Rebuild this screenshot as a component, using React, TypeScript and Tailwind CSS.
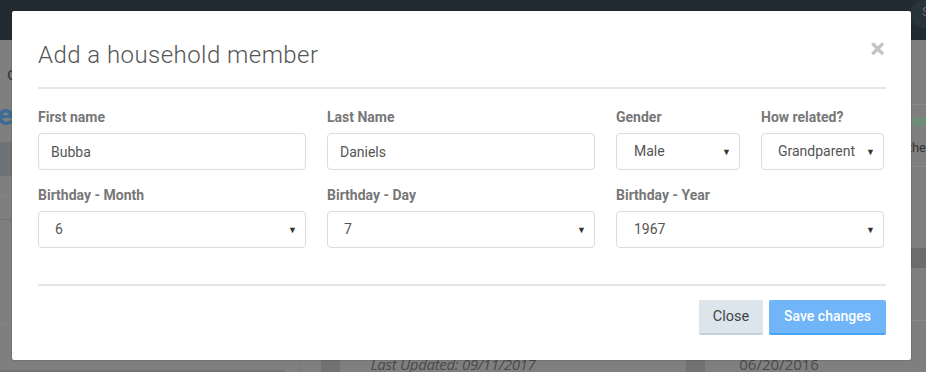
import { useState } from 'react';

const labelCls = 'block text-[14px] leading-5 font-bold text-[#777] mb-[6px]';
const boxCls =
  'relative w-full h-[37px] rounded-[4px] border border-[#dcdcdc] bg-white text-[14px] text-[#555] flex items-center';

function Select({ value, pad = 'pl-4' }: { value: string; pad?: string }) {
  return (
    <div className={boxCls}>
      <span className={pad + ' whitespace-nowrap'}>{value}</span>
      <span className="absolute right-[8px] top-[14px] text-[9px] leading-none text-[#333]">▼</span>
    </div>
  );
}

export default function App() {
  const [first, setFirst] = useState('Bubba');
  const [last, setLast] = useState('Daniels');

  return (
    <div className="relative w-[926px] h-[372px] overflow-hidden bg-[#7f7f7f] font-['Roboto',sans-serif]">
      {/* page behind the backdrop, drawn already dimmed */}
      <header className="h-10 bg-[#222b32] flex justify-end">
        <div className="w-[40px] h-[28px] -mr-[24px] rounded-bl-[14px] rounded-tl-[14px] bg-[#29333a] text-[#66707a] text-[13px] pl-[12px] pt-[2px]">
          S
        </div>
      </header>
      <div className="flex h-[332px]">
        <div className="w-[307px] flex flex-col border-r border-[#777]">
          <div className="h-[24px]" />
          <div className="pl-[7px] text-[18px] text-[#3a3a3a] leading-[20px]">c</div>
          <div className="h-[16px]" />
          <div className="-ml-[3px] text-[30px] font-bold leading-[30px] text-[#3c6c96] tracking-tight">er</div>
          <div className="h-[12px]" />
          <div className="h-[34px] bg-[#6d7377]" />
          <div className="h-[21px] border-b border-[#868686]" />
          <div className="h-[23px] border-b border-[#737373]" />
          <div className="h-[105px] border-b border-[#868686]" />
          <div className="flex-1" />
          <div className="h-[2px] w-[285px] bg-[#737373]" />
        </div>
        <div className="w-[21px]" />
        <div className="w-[20px] bg-[#727272]" />
        <div className="w-[353px] flex flex-col justify-end">
          <div className="pl-[30px] -mb-[3px] text-[15px] italic text-[#4a4a4a] font-['Open_Sans',sans-serif] tracking-[-0.3px] whitespace-nowrap">
            Last Updated: 09/11/2017
          </div>
        </div>
        <div className="w-[20px] bg-[#727272]" />
        <div className="flex-1 flex flex-col">
          <div className="h-[65px] border-b border-[#8a8a8a]" />
          <div className="h-[12px]" />
          <div className="h-[9px] bg-[#6f8c7b]" />
          <div className="h-[14px]" />
          <div className="pl-[192px] text-[13px] text-[#333] leading-[16px] whitespace-nowrap overflow-hidden">n the</div>
          <div className="h-[11px] border-b border-[#8a8a8a]" />
          <div className="h-[81px]" />
          <div className="h-[20px] bg-[#6c6c6c]" />
          <div className="h-[53px] border-b border-[#8a8a8a]" />
          <div className="flex-1 flex items-end">
            <div className="pl-[34px] -mb-[3px] text-[15px] text-[#4a4a4a] font-['Open_Sans',sans-serif]">06/20/2016</div>
          </div>
        </div>
      </div>

      {/* modal */}
      <div className="absolute left-[12px] top-[11px] w-[899px] h-[349px] bg-white rounded-[2px] shadow-[0_0_2px_rgba(0,0,0,0.35)] px-[26px]">
        <div className="flex items-start justify-between pt-[30px] pb-[18px] border-b-2 border-[#e6e6e6] w-[848px]">
          <h4 className="text-[24px] leading-7 font-light text-[#555] tracking-[0.45px]">Add a household member</h4>
          <button className="text-[28px] leading-none font-bold text-[#c3c3c3] mt-[-6px] mr-[1px]">×</button>
        </div>

        <div className="pt-[18px] pb-[36px] w-[848px]">
          <div className="grid grid-cols-[268px_268px_124px_123px] gap-x-[21px] gap-y-[15px] w-[846px]">
            <div>
              <label className={labelCls}>First name</label>
              <input
                value={first}
                onChange={(e) => setFirst(e.target.value)}
                className={boxCls + ' px-[12px] outline-none'}
              />
            </div>
            <div>
              <label className={labelCls}>Last Name</label>
              <input
                value={last}
                onChange={(e) => setLast(e.target.value)}
                className={boxCls + ' px-[12px] outline-none'}
              />
            </div>
            <div>
              <label className={labelCls}>Gender</label>
              <Select value="Male" pad="pl-[17px]" />
            </div>
            <div>
              <label className={labelCls}>How related?</label>
              <Select value="Grandparent" pad="pl-[16px]" />
            </div>
            <div>
              <label className={labelCls}>Birthday - Month</label>
              <Select value="6" />
            </div>
            <div>
              <label className={labelCls}>Birthday - Day</label>
              <Select value="7" />
            </div>
            <div className="col-span-2">
              <label className={labelCls}>Birthday - Year</label>
              <Select value="1967" pad="pl-[17px]" />
            </div>
          </div>
        </div>

        <div className="border-t-2 border-[#e6e6e6] w-[848px] pt-[14px] flex justify-end gap-[6px]">
          <button className="h-[35px] w-[64px] rounded-[2px] bg-[#dce5eb] border-b-2 border-[#c6d0d7] text-[14.5px] text-[#444]">
            Close
          </button>
          <button className="h-[35px] w-[117px] rounded-[2px] bg-[#6fb5f8] border-b-2 border-[#4aa2f2] text-[14px] font-medium text-white">
            Save changes
          </button>
        </div>
      </div>
    </div>
  );
}
